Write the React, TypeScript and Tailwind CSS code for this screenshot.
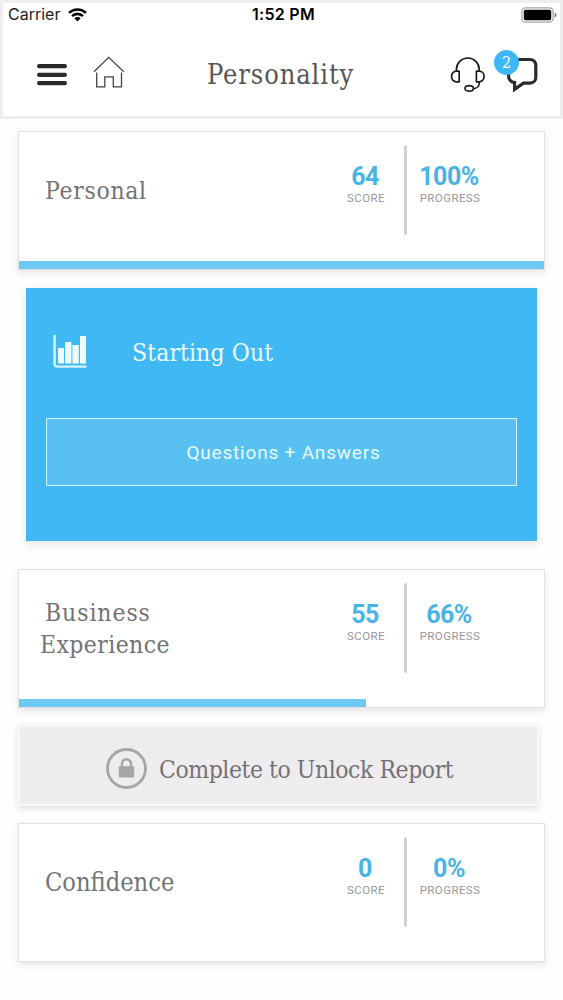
import type { ReactNode } from "react";

const SLAB = "font-['Roboto_Slab','DejaVu_Serif_Condensed','DejaVu_Serif',serif] [font-stretch:condensed]";

function StatusBar() {
  return (
    <div className="grid h-[23px] grid-cols-3 items-center pl-[5px] pr-0.5 font-['Inter',sans-serif] text-[16px] leading-[23px] text-[#1c1c1e]">
      <div className="flex items-center gap-[8px]">
        <span>Carrier</span>
        <svg width="19" height="14" viewBox="0 0 19 14" fill="none" stroke="#000" strokeWidth="2.6">
          <path d="M1 4.9a12.2 12.2 0 0 1 17 0" />
          <path d="M4.1 8.1a7.7 7.7 0 0 1 10.8 0" />
          <path d="M9.5 13.5 6.3 10.2a4.6 4.6 0 0 1 6.4 0z" fill="#000" stroke="none" />
        </svg>
      </div>
      <div className="whitespace-nowrap pl-px text-center font-semibold tracking-[0.3px] text-black">1:52 PM</div>
      <div className="flex justify-end">
        <svg className="mr-px" width="36" height="16" viewBox="0 0 36 16">
          <rect x="0.9" y="0.9" width="31.2" height="14.2" rx="3.6" fill="none" stroke="#a5a5a5" strokeWidth="1.3" />
          <rect x="2.8" y="2.8" width="27.4" height="10.4" rx="1.6" fill="#000" />
          <path d="M33.6 5.4v5.2c1.2-.4 1.8-1.4 1.8-2.6s-.6-2.2-1.8-2.6z" fill="#777" />
        </svg>
      </div>
    </div>
  );
}

function Header() {
  return (
    <header className="h-[119px] border-[3px] border-[#efedf0] bg-white">
      <StatusBar />
      <div className="flex h-[90px] items-start pl-[34px] pt-[25px]">
        <svg className="mt-[12px]" width="30" height="24" viewBox="0 0 30 24" stroke="#29292b" strokeWidth="4.2" strokeLinecap="round">
          <path d="M2.1 3.2h25.8M2.1 11.8h25.8M2.1 20.2h25.8" />
        </svg>
        <svg className="ml-[26px] mt-[5px]" width="32" height="32" viewBox="0 0 32 32" fill="none" stroke="#444" strokeWidth="1.3">
          <path d="M1 15.7 15.7 1.3 30.8 15.7" />
          <path d="M3.7 16.5v14.3h8.1v-10h8.5v10h8.2v-14.3" />
        </svg>
        <h1 className={`${SLAB} ml-[82px] w-[150px] whitespace-nowrap text-[27px] leading-[48px] tracking-[0.9px] text-[#555557]`}>
          Personality
        </h1>
        <svg className="ml-[93px] mt-[6px]" width="36" height="36" viewBox="0 0 36 36" fill="none" stroke="#1c1c1c" strokeWidth="1.7">
          <path d="M6.4 14V12.4a11.4 11.4 0 0 1 22.8 0V14" />
          <path d="M9.2 14.2v10.6H6.4a4.8 4.8 0 0 1-4.8-4.8v-1a4.8 4.8 0 0 1 4.8-4.8z" strokeLinejoin="round" />
          <path d="M26.4 14.2v10.6h2.8a4.8 4.8 0 0 0 4.8-4.8v-1a4.8 4.8 0 0 0-4.8-4.8z" strokeLinejoin="round" />
          <path d="M29.2 25v1.2c0 3-2.4 5.2-5.6 5.4" />
          <ellipse cx="19.2" cy="31.4" rx="4.2" ry="2.7" />
        </svg>
        <div className="relative ml-[18px] mt-[5px]">
          <svg width="34" height="38" viewBox="0 0 34 38" fill="none" stroke="#2b2b2d" strokeWidth="3.2">
            <path d="M9 3.5h17.2a5.6 5.6 0 0 1 5.6 5.6v12.4a5.6 5.6 0 0 1-5.6 5.6h-6.8L10.6 33.4v-6.8A6.2 6.2 0 0 1 4.6 20.4V9" />
          </svg>
          <span className={`${SLAB} absolute left-[-10px] top-[-6px] flex size-[25px] items-center justify-center rounded-full bg-[#3db8f4] text-[16px] leading-none text-white`}>
            2
          </span>
        </div>
      </div>
    </header>
  );
}

function Stat({ value, label, className }: { value: string; label: string; className: string }) {
  return (
    <div className={`flex flex-col items-center font-['Roboto',sans-serif] ${className}`}>
      <span className="pr-0.5 text-[25px] font-bold leading-[28px] tracking-[-0.5px] text-[#48b3e6]">{value}</span>
      <span className="text-[11.5px] leading-[14px] tracking-[0.4px] text-[#98989a]">{label}</span>
    </div>
  );
}

type CardProps = {
  title: ReactNode;
  score: number;
  progress: number;
};

function ScoreCard({ title, score, progress }: CardProps) {
  return (
    <section className="ml-[18px] flex h-[139px] w-[527px] flex-col border border-[#e2dfe5] bg-white shadow-[0_3px_7px_rgba(60,40,80,0.12)]">
      <div className="flex h-[129px] shrink-0">
        <h2 className={`${SLAB} flex h-[118px] w-[316px] items-center text-[24.5px] leading-[32px] text-[#737376]`}>
          <span className="whitespace-pre">{title}</span>
        </h2>
        <Stat value={`${score}`} label="SCORE" className="w-[62px] pt-[31px]" />
        <div className="ml-[7px] mt-[13px] h-[90px] w-[3px] rounded-full bg-[#d2d2d4]" />
        <Stat value={`${progress}%`} label="PROGRESS" className="w-[86px] pt-[31px]" />
      </div>
      <div className="h-[8px] shrink-0 bg-[#6ccaf2]" style={{ width: `${progress}%` }} />
    </section>
  );
}

function StartingOut() {
  return (
    <section className="ml-[26px] mt-[18px] h-[253px] w-[511px] bg-[#3fb8f3] px-5 shadow-[0_3px_9px_rgba(60,40,80,0.12)]">
      <div className="flex h-[130px] items-center">
        <svg className="ml-[7px] mt-[-2px]" width="34" height="34" viewBox="0 0 34 34" fill="#effcff">
          <path d="M1.6 1v28.2a2.4 2.4 0 0 0 2.4 2.4h28.6" fill="none" stroke="#d5f5ff" strokeWidth="2.4" strokeLinecap="round" />
          <rect x="5" y="13" width="6" height="15.5" />
          <rect x="12" y="7" width="6.4" height="21.5" />
          <rect x="19.4" y="10" width="6.4" height="18.5" />
          <rect x="27" y="1" width="6" height="27.5" />
        </svg>
        <h2 className={`${SLAB} ml-[45px] text-[24.5px] leading-[32px] tracking-[0.1px] text-[#effcff]`}>Starting Out</h2>
      </div>
      <button className="block h-[68px] w-[471px] border border-[#e0f8ff] bg-[#59c1f2] pl-1 pt-0.5 font-['Roboto',sans-serif] text-[19px] tracking-[0.8px] text-[#e6faff]">
        Questions + Answers
      </button>
    </section>
  );
}

function LockedReport() {
  return (
    <section className="ml-[18px] my-[17px] flex h-[81px] w-[521px] items-center border-2 border-[#f8f6f9] bg-[#efecef] pl-[86px] pt-[6px] shadow-[0_2px_6px_rgba(60,40,80,0.16)]">
      <svg width="41" height="41" viewBox="0 0 41 41">
        <circle cx="20.5" cy="20.5" r="19" fill="none" stroke="#a6a6a8" strokeWidth="2.8" />
        <rect x="12.8" y="18.2" width="15.4" height="11.4" rx="1" fill="#a6a6a8" />
        <path d="M16 19v-3.2a4.5 4.5 0 0 1 9 0V19" fill="none" stroke="#a6a6a8" strokeWidth="2.4" />
      </svg>
      <span className={`${SLAB} ml-[12px] whitespace-nowrap pt-0.5 text-[24.5px] leading-[32px] tracking-[-0.45px] text-[#737376]`}>
        Complete to Unlock Report
      </span>
    </section>
  );
}

export default function App() {
  return (
    <div className="h-[1000px] w-[563px] overflow-hidden bg-[#fefefe]">
      <Header />
      <main className="pt-[12px]">
        <ScoreCard title={<span className="ml-[26px] tracking-[0.7px]">Personal</span>} score={64} progress={100} />
        <StartingOut />
        <div className="h-7" />
        <ScoreCard
          title={
            <>
              <span className="ml-[26px] block tracking-[0.9px]">Business</span>
              <span className="ml-[21px] block tracking-[0.4px]">Experience</span>
            </>
          }
          score={55}
          progress={66}
        />
        <LockedReport />
        <ScoreCard title={<span className="ml-[26px] text-[25.2px]">Confidence</span>} score={0} progress={0} />
      </main>
    </div>
  );
}
